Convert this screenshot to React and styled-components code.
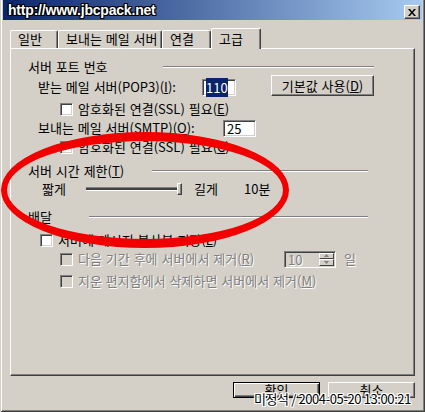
import styled, { createGlobalStyle } from 'styled-components';

const GlobalStyle = createGlobalStyle`
  html, body {
    margin: 0;
    padding: 0;
    background: #d4d0c8;
  }
  body {
    font-family: "Noto Sans CJK KR", "Noto Sans", sans-serif;
    font-size: 13px;
  }
  u { text-decoration-thickness: 1px; text-underline-offset: 1px; }
`;

function App() {
  return (
    <>
      <GlobalStyle />
      <Window>
        <TitleBar>
          <TitleText>http://www.jbcpack.net</TitleText>
          <CloseButton>
            <svg width="8" height="7" viewBox="0 0 8 7">
              <path d="M0 0h2l2 2.5L6 0h2L5 3.5 8 7H6L4 4.5 2 7H0l3-3.5z" fill="#000" />
            </svg>
          </CloseButton>
        </TitleBar>

        <TabStrip>
          <Tab $w={48}>일반</Tab>
          <Tab $w={104}>보내는 메일 서버</Tab>
          <Tab $w={49}>연결</Tab>
          <Tab $w={50} $active>고급</Tab>
        </TabStrip>

        <Panel>
          <Row>
            <GroupTitle $lineFrom={135}>서버 포트 번호</GroupTitle>
            <GroupLine $endGap={0} />
          </Row>
          <Row $mt={4} $indent={10}>
            <Label $w={164}>받는 메일 서버(POP3)(<u>I</u>):</Label>
            <TextBox $w={34}><Selected>110</Selected></TextBox>
            <PushButton $w={103}>기본값 사용(<u>D</u>)</PushButton>
          </Row>
          <Row $mt={6} $indent={32}>
            <CheckBox />
            <Label>암호화된 연결(SSL) 필요(<u>E</u>)</Label>
          </Row>
          <Row $mt={3} $indent={10}>
            <Label $w={185}>보내는 메일 서버(SMTP)(<u>O</u>):</Label>
            <TextBox $w={33}>25</TextBox>
          </Row>
          <Row $mt={3} $indent={32}>
            <CheckBox />
            <Label>암호화된 연결(SSL) 필요(<u>C</u>)</Label>
          </Row>

          <Row $mt={8}>
            <GroupTitle $lineFrom={124}>서버 시간 제한(<u>T</u>)</GroupTitle>
            <GroupLine $endGap={6} />
          </Row>
          <Row $mt={2} $indent={14}>
            <Label $w={44}>짧게</Label>
            <Track />
            <Thumb />
            <Label $w={50} $ml={12}>길게</Label>
            <Label>10분</Label>
          </Row>

          <Row $mt={12}>
            <GroupTitle $lineFrom={61}>배달</GroupTitle>
            <GroupLine $endGap={6} />
          </Row>
          <Row $mt={7} $indent={12}>
            <CheckBox />
            <Label>서버에 메시지 복사본 저장(<u>L</u>)</Label>
          </Row>
          <Row $mt={3} $indent={32}>
            <CheckBox $disabled />
            <Label $w={206} $disabled>다음 기간 후에 서버에서 제거(<u>R</u>)</Label>
            <SpinBox>
              <SpinValue>10</SpinValue>
              <SpinButtons>
                <SpinHalf>
                  <svg width="5" height="3" viewBox="0 0 5 3"><path d="M2.5 0L5 3H0z" fill="#808080" /></svg>
                </SpinHalf>
                <SpinHalf>
                  <svg width="5" height="3" viewBox="0 0 5 3"><path d="M0 0h5L2.5 3z" fill="#808080" /></svg>
                </SpinHalf>
              </SpinButtons>
            </SpinBox>
            <Label $ml={8} $disabled>일</Label>
          </Row>
          <Row $mt={6} $indent={32}>
            <CheckBox $disabled />
            <Label $disabled>지운 편지함에서 삭제하면 서버에서 제거(<u>M</u>)</Label>
          </Row>
        </Panel>

        <ButtonRow>
          <PushButton $w={87} $h={16} $default>확인</PushButton>
          <PushButton $w={87} $h={16}>취소</PushButton>
        </ButtonRow>

        <Scribble viewBox="0 0 425 412" width="425" height="412">
          <path
            fillRule="evenodd"
            fill="#f20000"
            d="M1 190a144 58 0 1 0 288 0a144 58 0 1 0 -288 0zM7 190a138 49 0 1 0 276 0a138 49 0 1 0 -276 0z"
          />
        </Scribble>
        <Stamp>미정석 / 2004-05-20 13:00:21</Stamp>
      </Window>
    </>
  );
}
export default App;

const Window = styled.div`
  position: relative;
  width: 425px;
  height: 412px;
  box-sizing: border-box;
  padding: 0 3px 3px 3px;
  display: flex;
  flex-direction: column;
  overflow: hidden;
  background: #d4d0c8;
  color: #000;
  font-size: 13px;
  line-height: 14px;
  word-spacing: 1px;
  box-shadow: inset 1px 0 #d4d0c8, inset -1px -1px #404040, inset 2px 0 #fff,
    inset -2px -2px #808080;
`;
const TitleBar = styled.div`
  height: 20px;
  display: flex;
  align-items: center;
  justify-content: space-between;
  padding: 0 2px 0 5px;
  background: linear-gradient(to right, #0a246a, #a6caf0);
`;
const TitleText = styled.div`
  font-family: "Liberation Sans", Arial, sans-serif;
  font-weight: bold;
  font-size: 14px;
  line-height: 16px;
  word-spacing: 0;
  letter-spacing: -0.2px;
  color: #fff;
  text-shadow: 1px 0 #000, -1px 0 #000, 0 1px #000, 0 -1px #000, 1px 1px #000,
    -1px -1px #000, 1px -1px #000, -1px 1px #000;
`;
const CloseButton = styled.div`
  align-self: flex-end;
  margin-bottom: 1px;
  width: 16px;
  height: 14px;
  box-sizing: border-box;
  display: flex;
  align-items: center;
  justify-content: center;
  background: #d4d0c8;
  border: 1px solid;
  border-color: #fff #404040 #404040 #fff;
  box-shadow: inset -1px -1px #808080;
`;
const TabStrip = styled.div`
  position: relative;
  z-index: 1;
  display: flex;
  align-items: flex-end;
  height: 20px;
  margin: 8px 7px 0 7px;
`;
const Tab = styled.div`
  width: ${(p) => p.$w}px;
  height: ${(p) => (p.$active ? 21 : 18)}px;
  margin-bottom: ${(p) => (p.$active ? -1 : 0)}px;
  box-sizing: border-box;
  padding: ${(p) => (p.$active ? 3 : 1)}px 0 0 7px;
  background: #d4d0c8;
  white-space: nowrap;
  border-top: 1px solid #fff;
  border-left: 1px solid #fff;
  border-right: 1px solid #404040;
  border-radius: 2px 2px 0 0;
  box-shadow: inset -1px 0 #808080;
`;
const Panel = styled.div`
  height: 328px;
  margin: 0 7px;
  box-sizing: border-box;
  padding: 10px 40px 0 17px;
  border: 1px solid;
  border-color: #fff #404040 #404040 #fff;
  box-shadow: inset -1px -1px #808080;
  display: flex;
  flex-direction: column;
`;
const Row = styled.div`
  display: flex;
  align-items: center;
  height: 16px;
  margin-top: ${(p) => p.$mt || 0}px;
  padding-left: ${(p) => p.$indent || 0}px;
  white-space: nowrap;
`;
const GroupTitle = styled.span`
  min-width: ${(p) => p.$lineFrom}px;
`;
const GroupLine = styled.div`
  flex: 1;
  height: 0;
  margin-right: ${(p) => p.$endGap}px;
  border-top: 1px solid #808080;
  border-bottom: 1px solid #fff;
`;
const Label = styled.span`
  ${(p) => (p.$w ? `width: ${p.$w}px; flex: none;` : '')}
  margin-left: ${(p) => p.$ml || 0}px;
  color: ${(p) => (p.$disabled ? '#808080' : '#000')};
  text-shadow: ${(p) => (p.$disabled ? '1px 1px 0 #fff' : 'none')};
`;
const TextBox = styled.div`
  width: ${(p) => p.$w}px;
  height: 17px;
  box-sizing: border-box;
  flex: none;
  padding: 1px 0 0 3px;
  background: #fff;
  border: 1px solid;
  border-color: #808080 #fff #fff #808080;
  box-shadow: inset 1px 1px #404040, inset -1px -1px #d4d0c8;
`;
const Selected = styled.span`
  background: #0a246a;
  color: #fff;
`;
const PushButton = styled.div`
  width: ${(p) => p.$w}px;
  height: ${(p) => p.$h || 21}px;
  box-sizing: border-box;
  flex: none;
  display: flex;
  align-items: center;
  justify-content: center;
  background: #d4d0c8;
  ${(p) =>
    p.$default
      ? `border: 1px solid #000;
         box-shadow: inset 1px 1px #fff, inset -1px -1px #404040, inset -2px -2px #808080;`
      : `border: 1px solid;
         border-color: #fff #404040 #404040 #fff;
         box-shadow: inset -1px -1px #808080;`}
  ${(p) => (p.$h ? '' : 'margin-left: auto; align-self: flex-start; margin-top: -4px;')}
`;
const CheckBox = styled.div`
  width: 13px;
  height: 13px;
  box-sizing: border-box;
  flex: none;
  margin-right: 5px;
  background: ${(p) => (p.$disabled ? '#d4d0c8' : '#fff')};
  border: 1px solid;
  border-color: #808080 #fff #fff #808080;
  box-shadow: inset 1px 1px #404040, inset -1px -1px #d4d0c8;
`;
const Track = styled.div`
  width: 91px;
  height: 2px;
  flex: none;
  background: #404040;
  border-top: 1px solid #808080;
  border-bottom: 1px solid #fff;
`;
const Thumb = styled.div`
  width: 5px;
  height: 12px;
  box-sizing: border-box;
  flex: none;
  background: #d4d0c8;
  border: 1px solid;
  border-color: #fff #404040 #404040 #fff;
  box-shadow: inset -1px -1px #808080;
`;
const SpinBox = styled.div`
  width: 52px;
  height: 17px;
  box-sizing: border-box;
  flex: none;
  display: flex;
  background: #d4d0c8;
  border: 1px solid;
  border-color: #808080 #fff #fff #808080;
  box-shadow: inset 1px 1px #404040, inset -1px -1px #d4d0c8;
`;
const SpinValue = styled.span`
  flex: 1;
  padding: 1px 0 0 3px;
  color: #808080;
  text-shadow: 1px 1px 0 #fff;
`;
const SpinButtons = styled.div`
  width: 15px;
  display: flex;
  flex-direction: column;
  padding: 1px 1px 1px 0;
`;
const SpinHalf = styled.div`
  flex: 1;
  display: flex;
  align-items: center;
  justify-content: center;
  box-sizing: border-box;
  border: 1px solid;
  border-color: #fff #404040 #404040 #fff;
`;
const ButtonRow = styled.div`
  display: flex;
  justify-content: flex-end;
  gap: 8px;
  margin: 6px 7px 0 0;
`;
const Scribble = styled.svg`
  position: absolute;
  left: 0;
  top: 0;
  pointer-events: none;
`;
const Stamp = styled.div`
  position: absolute;
  left: 254px;
  top: 392px;
  font-size: 13px;
  line-height: 14px;
  letter-spacing: -0.4px;
  word-spacing: 0;
  white-space: nowrap;
  color: #000;
  text-shadow: 1px 0 #fff, -1px 0 #fff, 0 1px #fff, 0 -1px #fff, 1px 1px #fff,
    -1px -1px #fff, 1px -1px #fff, -1px 1px #fff;
`;
